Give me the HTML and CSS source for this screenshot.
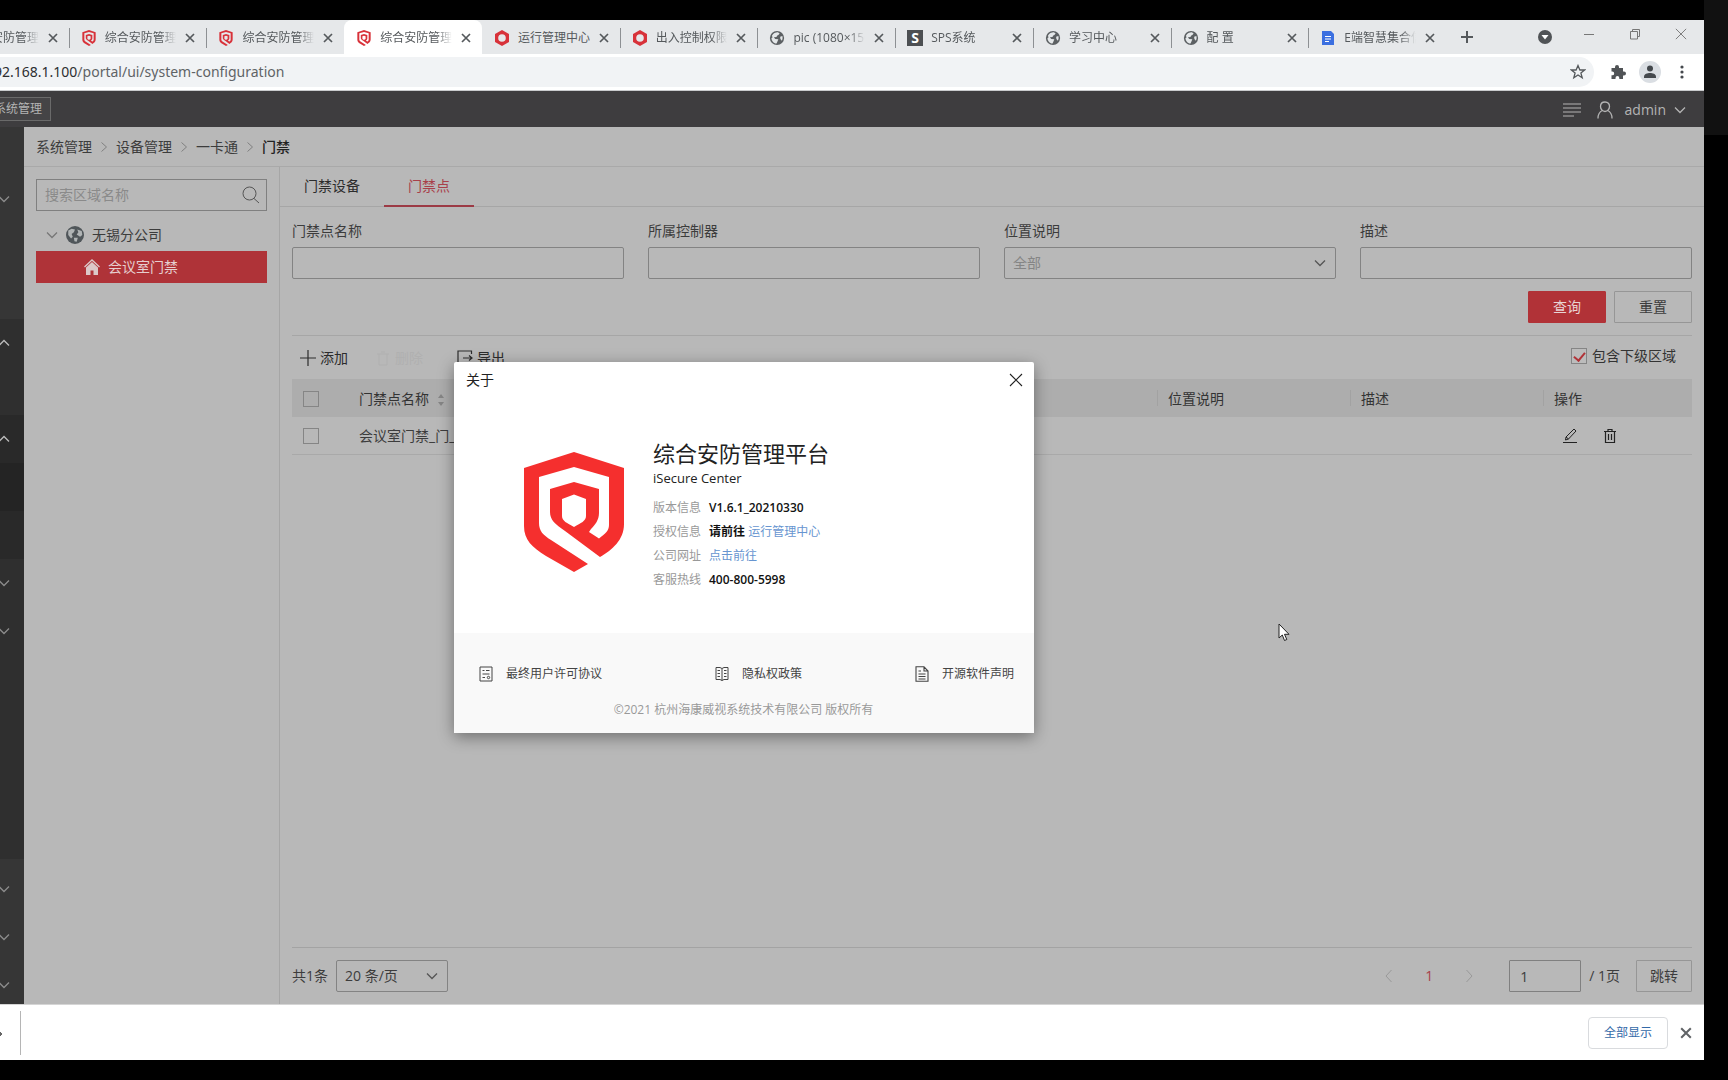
FILE: index.html
```html
<!DOCTYPE html>
<html lang="zh-CN">
<head>
<meta charset="utf-8">
<title>综合安防管理平台</title>
<link rel="stylesheet" href="styles.css">
</head>
<body>
<svg class="defs" aria-hidden="true">
  <symbol id="shield" viewBox="0 0 100 120">
    <path fill="currentColor" fill-rule="evenodd" d="M50 0 100 16V72C100 88 88 98 76 105L41 79C31 72 26 68 26 60V37L50 30 75 37V61C75 68 71 73 67 77L65 80 75 86.500C81 82 85 79 85 73V25L50 15 15 25V71C15 79 19 83 27 88L64 112 50 120 22 104C8 95 0 88 0 74V16ZM50 42.500 38 47V64C38 69 43 71 50 75 57 71 62 69 62 64V47Z"/>
  </symbol>
  <symbol id="hex" viewBox="0 0 16 16"><path fill="currentColor" fill-rule="evenodd" d="M8 0 15 4V12L8 16 1 12V4ZM8 4.200A3.800 3.800 0 1 0 8 11.800 3.800 3.800 0 0 0 8 4.200Z"/></symbol>
  <symbol id="globe" viewBox="-1 -1 18 18"><circle cx="8" cy="8" r="8" fill="#5c6063"/><path fill="#e4e7e9" d="M9 1.600 11 3 9.500 4.500 8 5.500 7.500 7 4.500 7.200 6 9 9.500 9.500 8.500 12 7.500 14.300C4 14 1.800 11 1.800 8L3 7.500 2.300 5.500C4 2.500 6.500 1.500 9 1.600ZM11.500 6.500 14 5.800C14.600 8 14.300 9.500 13.500 11L11.800 9.200Z"/></symbol>
  <symbol id="cross" viewBox="0 0 10 10"><path d="M1 1 9 9M9 1 1 9" fill="none" stroke="currentColor" stroke-width="1.700"/></symbol>
  <symbol id="thin-cross" viewBox="0 0 14 14"><path d="M1 1 13 13M13 1 1 13" fill="none" stroke="currentColor" stroke-width="1.100"/></symbol>
  <symbol id="down" viewBox="0 0 12 12"><path d="M1 3.500 6 8.500 11 3.500" fill="none" stroke="currentColor" stroke-width="1.300"/></symbol>
  <symbol id="up" viewBox="0 0 12 12"><path d="M1 8.500 6 3.500 11 8.500" fill="none" stroke="currentColor" stroke-width="1.300"/></symbol>
  <symbol id="right" viewBox="0 0 12 12"><path d="M3.500 1.500 8.500 6 3.500 10.500" fill="none" stroke="currentColor"/></symbol>
  <symbol id="left" viewBox="0 0 12 12"><path d="M8.500 0 3 6 8.500 12" fill="none" stroke="currentColor"/></symbol>
</svg>
<div class="screen">
<div class="window">
  <header class="tabstrip">
    <nav class="tabs" aria-label="标签页">
      <div class="tab"><svg class="fav red"><use href="#shield"/></svg><span class="tab-title">综合安防管理平台</span><button class="tab-close" aria-label="关闭"><svg><use href="#cross"/></svg></button></div>
      <div class="tab"><svg class="fav red"><use href="#shield"/></svg><span class="tab-title">综合安防管理平台</span><button class="tab-close" aria-label="关闭"><svg><use href="#cross"/></svg></button></div>
      <div class="tab"><svg class="fav red"><use href="#shield"/></svg><span class="tab-title">综合安防管理平台</span><button class="tab-close" aria-label="关闭"><svg><use href="#cross"/></svg></button></div>
      <div class="tab tab-active"><svg class="fav red"><use href="#shield"/></svg><span class="tab-title">综合安防管理平台</span><button class="tab-close" aria-label="关闭"><svg><use href="#cross"/></svg></button></div>
      <div class="tab"><svg class="fav red"><use href="#hex"/></svg><span class="tab-title tab-title-whole">运行管理中心</span><button class="tab-close" aria-label="关闭"><svg><use href="#cross"/></svg></button></div>
      <div class="tab"><svg class="fav red"><use href="#hex"/></svg><span class="tab-title">出入控制权限管理</span><button class="tab-close" aria-label="关闭"><svg><use href="#cross"/></svg></button></div>
      <div class="tab"><svg class="fav"><use href="#globe"/></svg><span class="tab-title">pic (1080×1500)</span><button class="tab-close" aria-label="关闭"><svg><use href="#cross"/></svg></button></div>
      <div class="tab"><span class="fav fav-s">S</span><span class="tab-title">SPS系统</span><button class="tab-close" aria-label="关闭"><svg><use href="#cross"/></svg></button></div>
      <div class="tab"><svg class="fav"><use href="#globe"/></svg><span class="tab-title">学习中心</span><button class="tab-close" aria-label="关闭"><svg><use href="#cross"/></svg></button></div>
      <div class="tab"><svg class="fav"><use href="#globe"/></svg><span class="tab-title">配 置</span><button class="tab-close" aria-label="关闭"><svg><use href="#cross"/></svg></button></div>
      <div class="tab"><svg class="fav" viewBox="0 0 16 16"><path fill="#3b6fe0" d="M2 1H11L14 4V15H2Z"/><path d="M5 6.500H11M5 9H11M5 11.500H9" stroke="#fff" stroke-width="1.200"/></svg><span class="tab-title">E端智慧集合信息</span><button class="tab-close" aria-label="关闭"><svg><use href="#cross"/></svg></button></div>
    </nav>
    <div class="window-controls">
      <button class="new-tab" aria-label="新标签页"><svg width="12" height="12" viewBox="0 0 12 12"><path d="M6 0V12M0 6H12" stroke="#55595c" stroke-width="2"/></svg></button>
      <button class="tab-search" aria-label="搜索标签页"><svg width="14" height="14" viewBox="0 0 14 14"><circle cx="7" cy="7" r="7" fill="#505356"/><path d="M3.500 5H10.500L7 9.500Z" fill="#fff"/></svg></button>
      <button class="raised" aria-label="最小化"><svg width="12" height="12" viewBox="0 0 12 12"><path d="M1 6.500H11" stroke="#777"/></svg></button>
      <button class="raised" aria-label="还原"><svg width="12" height="12" viewBox="0 0 12 12"><path d="M1.500 3.500H8.500V11H1.500ZM3.500 3.500V1.500H10.500V8.500H8.500" fill="none" stroke="#777"/></svg></button>
      <button class="raised" aria-label="关闭窗口"><svg width="12" height="12"><use href="#thin-cross"/></svg></button>
    </div>
  </header>
  <div class="toolbar">
    <div class="omnibox">
      <span class="url"><b>192.168.1.100</b>/portal/ui/system-configuration</span>
      <button class="tool" aria-label="收藏"><svg width="16" height="16" viewBox="0 0 16 16"><path d="M8 1.500 9.900 6H14.600L10.900 9 12.200 13.800 8 11 3.800 13.800 5.100 9 1.400 6H6.100Z" fill="none" stroke="#55595c" stroke-width="1.300"/></svg></button>
    </div>
    <button class="tool" aria-label="扩展程序"><svg width="16" height="16" viewBox="0 0 16 16"><path fill="#505356" d="M1.500 4H5V3A2 2 0 0 1 9 3V4H13V7.500H14A1.900 1.900 0 0 1 14 11.500H13V15H9.300V14A1.900 1.900 0 0 0 5.500 14V15H1.500V11.300H2.300A1.900 1.900 0 0 0 2.300 7.500H1.500Z"/></svg></button>
    <button class="tool" aria-label="用户"><svg width="22" height="22" viewBox="0 0 22 22"><circle cx="11" cy="11" r="11" fill="#dadee3"/><circle cx="11" cy="7.500" r="3" fill="#44484d"/><path d="M5 17V15.500C5 13 8.500 12 11 12S17 13 17 15.500V17Z" fill="#44484d"/></svg></button>
    <button class="tool" aria-label="更多"><svg width="4" height="14" viewBox="0 0 4 14"><g fill="#44484d"><circle cx="2" cy="2" r="1.600"/><circle cx="2" cy="7" r="1.600"/><circle cx="2" cy="12" r="1.600"/></g></svg></button>
  </div>

  <div class="app">
    <div class="app-header">
      <button class="module">系统管理</button>
      <div class="account">
        <svg width="18" height="14" viewBox="0 0 18 14"><path d="M0 1H18M0 5H18M0 9H18M0 13H11" stroke="currentColor"/></svg>
        <svg width="16" height="18" viewBox="0 0 16 18"><path d="M8 1C5 1 3.500 3 3.500 5.500S5.500 10.500 8 10.500 12.500 8 12.500 5.500 11 1 8 1ZM1 17.500C1 13 3 10.500 5.500 9.500M15 17.500C15 13 13 10.500 10.500 9.500" fill="none" stroke="currentColor" stroke-width="1.300"/></svg>
        <span>admin</span>
        <svg width="12" height="12"><use href="#down"/></svg>
      </div>
    </div>
    <div class="app-body">
      <nav class="rail" aria-label="菜单">
        <div class="rail-group g1"><button aria-label="展开"><svg><use href="#down"/></svg></button></div>
        <div class="rail-group g2 open"><button aria-label="收起"><svg><use href="#up"/></svg></button></div>
        <div class="rail-group g3 open"><button aria-label="收起"><svg><use href="#up"/></svg></button><span class="rail-current"></span></div>
        <div class="rail-group g4"><button aria-label="展开"><svg><use href="#down"/></svg></button><button aria-label="展开"><svg><use href="#down"/></svg></button></div>
        <div class="rail-group g5"><button aria-label="展开"><svg><use href="#down"/></svg></button><button aria-label="展开"><svg><use href="#down"/></svg></button><button aria-label="展开"><svg><use href="#down"/></svg></button></div>
      </nav>
      <div class="page">
        <nav class="crumbs" aria-label="路径">
          <a href="#">系统管理</a><svg><use href="#right"/></svg><a href="#">设备管理</a><svg><use href="#right"/></svg><a href="#">一卡通</a><svg><use href="#right"/></svg><strong>门禁</strong>
        </nav>
        <div class="split">
          <aside class="tree">
            <div class="search">
              <input type="text" placeholder="搜索区域名称" aria-label="搜索区域名称">
              <svg width="18" height="18" viewBox="0 0 18 18"><circle cx="7.500" cy="7.500" r="6.500" fill="none" stroke="#555"/><path d="M12 12.500 17 17" stroke="#555"/></svg>
            </div>
            <div class="node">
              <svg width="12" height="12"><use href="#down"/></svg>
              <svg width="18" height="18" viewBox="0 0 16 16"><circle cx="8" cy="8" r="8" fill="#50565a"/><path fill="#b0b4b5" d="M2 4 5 2.500 8 3 7 5.500 5 7 6 9.500 4.500 11 2 8ZM10 3 14 4.500 14.500 8 12.500 9.500 9.500 7.500 11 5.500ZM7 10.500 10.500 10.500 9.500 14 7.500 13.500Z"/></svg>
              <span>无锡分公司</span>
            </div>
            <div class="node node-selected">
              <svg width="16" height="16" viewBox="0 0 16 16"><path d="M.5 8 8 1 15.500 8" fill="none" stroke="#dcc9c9" stroke-width="1.300"/><path fill="#dcc9c9" d="M2 8.500 8 3 14 8.500V16H9.500V11.500H6.500V16H2Z"/></svg>
              <span>会议室门禁</span>
            </div>
          </aside>
          <main class="content">
            <div class="subtabs"><button>门禁设备</button><button class="current">门禁点</button></div>
            <form class="filters">
              <div class="field"><label for="f1">门禁点名称</label><input id="f1" type="text"></div>
              <div class="field"><label for="f2">所属控制器</label><input id="f2" type="text"></div>
              <div class="field"><label for="f3">位置说明</label><div class="select"><select id="f3" class="muted"><option>全部</option></select><svg><use href="#down"/></svg></div></div>
              <div class="field"><label for="f4">描述</label><input id="f4" type="text"></div>
              <div class="actions"><button type="button" class="btn btn-primary">查询</button><button type="button" class="btn">重置</button></div>
            </form>
            <div class="list">
              <div class="list-tools">
                <button class="action"><svg width="16" height="16" viewBox="0 0 16 16"><path d="M8 0V16M0 8H16" stroke="currentColor" stroke-width="1.200"/></svg>添加</button>
                <button class="action action-off" disabled><svg width="16" height="16" viewBox="0 0 16 16"><path d="M2 4H14M4 4V15H12V4M6 2H10" fill="none" stroke="currentColor"/></svg>删除</button>
                <button class="action"><svg width="16" height="16" viewBox="0 0 16 16"><path d="M14.500 4V1H1V15H14.500V12M6 8H15M12 5.500 15 8 12 10.500" fill="none" stroke="currentColor" stroke-width="1.200"/></svg>导出</button>
                <label class="include"><input type="checkbox" checked>包含下级区域</label>
              </div>
              <table class="grid">
                <colgroup><col class="c-check"><col class="c-name"><col><col class="c-mid"><col class="c-mid"><col class="c-ops"></colgroup>
                <thead><tr><th><input type="checkbox" aria-label="全选"></th><th>门禁点名称<svg class="sort" width="8" height="14" viewBox="0 0 8 14"><path fill="#858585" d="M4 1 7 5H1ZM4 13 7 9H1Z"/></svg></th><th></th><th class="sep">位置说明</th><th class="sep">描述</th><th class="sep">操作</th></tr></thead>
                <tbody><tr><td><input type="checkbox" aria-label="选择"></td><td>会议室门禁_门_</td><td></td><td></td><td></td><td>
                  <div class="ops">
                  <button aria-label="编辑"><svg width="16" height="16" viewBox="0 0 16 16"><path d="M1 14.500H15M3.500 12 4 9 12 1 14 3 6.500 11ZM4 9 6.500 11" fill="none" stroke="currentColor"/></svg></button>
                  <button aria-label="删除行"><svg width="14" height="16" viewBox="0 0 14 16"><path d="M1 3.500H13M5 3.500V1.500H9V3.500M2.500 3.500V14.500H11.500V3.500M5.500 6V12M8.500 6V12" fill="none" stroke="currentColor" stroke-width="1.200"/></svg></button>
                  </div>
                </td></tr></tbody>
              </table>
            </div>
            <div class="pager">
              <span>共1条</span>
              <div class="select page-size"><select aria-label="每页条数"><option>20 条/页</option></select><svg><use href="#down"/></svg></div>
              <div class="pages"><button aria-label="上一页" disabled><svg><use href="#left"/></svg></button><button class="page-now">1</button><button aria-label="下一页" disabled><svg class="flip"><use href="#left"/></svg></button></div>
              <input class="page-input" type="text" value="1" aria-label="页码">
              <span>/ 1页</span>
              <button class="btn btn-jump">跳转</button>
            </div>
          </main>
        </div>
      </div>
    </div>
  </div>
  <footer class="downloads">
    <span class="download-menu"></span>
    <button class="show-all">全部显示</button>
    <button class="downloads-close" aria-label="关闭下载栏"><svg width="12" height="12"><use href="#cross"/></svg></button>
  </footer>
</div>
<div class="edge"></div>

<section class="dialog" role="dialog" aria-labelledby="about">
  <header class="dialog-head"><h2 id="about">关于</h2><button aria-label="关闭对话框"><svg width="14" height="14"><use href="#thin-cross"/></svg></button></header>
  <div class="about">
    <svg class="logo"><use href="#shield"/></svg>
    <div>
      <h1>综合安防管理平台</h1>
      <p class="product">iSecure Center</p>
      <dl>
        <dt>版本信息</dt><dd>V1.6.1_20210330</dd>
        <dt>授权信息</dt><dd>请前往 <a href="#">运行管理中心</a></dd>
        <dt>公司网址</dt><dd><a href="#">点击前往</a></dd>
        <dt>客服热线</dt><dd>400-800-5998</dd>
      </dl>
    </div>
  </div>
  <footer class="legal">
    <div class="legal-links">
      <a href="#"><svg viewBox="0 0 14 16"><path d="M1 1H13V15H1ZM3.500 4.500H5.500M7 4.500H10.500M3.500 8H10.500M3.500 11.500H6" fill="none" stroke="currentColor"/><circle cx="9.500" cy="11.500" r="1.200" fill="none" stroke="currentColor"/></svg>最终用户许可协议</a>
      <a href="#"><svg viewBox="0 0 14 16"><path d="M7 2.500 5 1.500H1V13.500H5L7 14.500 9 13.500H13V1.500H9ZM7 2.500V14.500M2.500 4.500H5M2.500 7.500H5M2.500 10.500H5M9 4.500H11.500M9 7.500H11.500M9 10.500H11.500" fill="none" stroke="currentColor"/></svg>隐私权政策</a>
      <a href="#"><svg viewBox="0 0 14 16"><path d="M1 .8H9L13 5V15.200H1ZM9 1V5H13M3.500 8H10.500M3.500 10.500H10.500M3.500 13H10.500M3.500 5H6" fill="none" stroke="currentColor" stroke-width="1.100"/></svg>开源软件声明</a>
    </div>
    <p>©2021 杭州海康威视系统技术有限公司 版权所有</p>
  </footer>
</section>
<svg class="cursor" viewBox="0 0 12 19"><path d="M1 1V15L4.300 12 6.500 17.500 8.800 16.500 6.500 11.300H11Z" fill="#fff" stroke="#222"/></svg>
</div>
</body>
</html>
```
FILE: styles.css
```css
* { box-sizing: border-box; }
body { margin: 0; background: #000; color: #3c3c3c; font: 14px/20px "Open Sans", "Noto Sans CJK SC", sans-serif; }
button, input, select { font: inherit; color: inherit; margin: 0; padding: 0; border: 0; background: none; }
button { display: flex; align-items: center; justify-content: center; }
h1, h2, p, dl, dd { margin: 0; font-weight: 400; }
a { color: inherit; text-decoration: none; }
svg { flex: none; }
.defs { position: absolute; width: 0; height: 0; }

.screen { position: relative; display: grid; grid-template-columns: minmax(0, 1fr) 24px; min-height: 100vh; overflow: hidden; }
.window { display: flex; flex-direction: column; padding: 20px 0; overflow: hidden; }
.edge { height: 135px; background: #111; }

/* Browser chrome */
.tabstrip { display: flex; height: 34px; background: #e6e8ea; }
.tabs { display: flex; flex: 1; min-width: 0; margin-left: -69px; }
.tab { display: flex; flex: 1 1 0; min-width: 0; align-items: center; padding: 2px 8px 0 12px; color: #55595c; font-size: 12px; }
.tab::before { content: ""; width: 1px; height: 20px; margin-left: -12px; margin-right: 11px; background: #8d9093; }
.tab-active { background: #fff; border-radius: 8px 8px 0 0; }
.tab-active::before, .tab-active + .tab::before { background: transparent; }
.fav { width: 16px; height: 16px; margin-right: 8px; }
.red { color: #d8323a; }
.fav-s { flex: none; background: #4c4f52; color: #fff; font-weight: 700; font-size: 14px; line-height: 16px; text-align: center; }
.tab-title { flex: 1; min-width: 0; overflow: hidden; white-space: nowrap; mask-image: linear-gradient(to right, #000 78%, transparent); }
.tab-title-whole { mask-image: none; }
.tab-close { width: 16px; height: 16px; margin-left: 6px; }
.tab-close svg { width: 10px; height: 10px; }
.window-controls { display: flex; width: 258px; }
.window-controls button { width: 46px; }
.window-controls .new-tab { width: 42px; margin-right: auto; }
.window-controls .tab-search { width: 42px; }
.window-controls .raised { padding-bottom: 6px; color: #777; }
.toolbar { display: flex; align-items: center; height: 37px; padding-right: 6px; background: #fff; border-bottom: 1px solid #c9cbcd; }
.omnibox { display: flex; flex: 1; align-items: center; justify-content: space-between; height: 30px; margin-right: 8px; overflow: hidden; background: #f1f3f5; border-radius: 0 15px 15px 0; }
.url { margin-left: -14px; color: #5f6366; font-family: "Noto Sans", sans-serif; }
.url b { color: #2c2e30; font-weight: 400; }
.tool { width: 32px; height: 28px; }

/* Application */
.app { display: flex; flex: 1; flex-direction: column; }
.app-header { display: flex; align-items: center; justify-content: space-between; height: 36px; padding-right: 18px; background: #3e3d3f; color: #b4b4b4; }
.module { height: 24px; padding: 0 8px; margin-left: -15px; border: 1px solid #6a6a6a; background: #454446; font-size: 12px; }
.account { display: flex; align-items: center; gap: 12px; padding-top: 2px; }
.account svg:first-child { margin-right: 4px; }
.account svg:last-child { margin-left: -4px; }
.app-body { display: flex; flex: 1; }
.rail { display: flex; flex-direction: column; width: 24px; background: #363636; color: #8c8c8c; overflow: hidden; }
.rail button { width: 8px; height: 48px; }
.rail button svg { width: 12px; height: 12px; }
.rail-group.g1 { height: 192px; padding-top: 48px; }
.rail-group.g2 { height: 96px; background: #2f2f2f; }
.rail-group.g3 { height: 144px; background: #292929; }
.rail-group.g4 { height: 300px; background: #2f2f2f; }
.rail-group.g5 { flex: 1 1 0; height: 0; min-height: 0; padding-top: 6px; overflow: hidden; }
.open { color: #bcbcbc; }
.rail-current { display: block; height: 48px; background: #242424; }
.page { display: flex; flex: 1; flex-direction: column; min-width: 0; background: #b8b8b8; }
.crumbs { display: flex; align-items: center; gap: 6px; height: 40px; padding: 0 12px; border-bottom: 1px solid #a9a9a9; }
.crumbs svg { width: 12px; height: 12px; color: #808080; }
.crumbs strong { color: #222; font-weight: 500; }
.split { display: flex; flex: 1; }
.tree { width: 256px; padding: 12px; border-right: 1px solid #a6a6a6; }
.search { display: flex; align-items: center; height: 32px; margin-bottom: 8px; padding: 0 6px 0 8px; border: 1px solid #808080; }
.search input { flex: 1; min-width: 0; }
.search input::placeholder { color: #8a8a8a; opacity: 1; }
.node { display: flex; align-items: center; gap: 8px; height: 32px; padding-left: 10px; }
.node svg:first-child { color: #777; }
.node-selected { padding-left: 48px; background: #af3338; color: #e6cfd0; }
.content { display: flex; flex: 1; flex-direction: column; min-width: 0; }
.subtabs { display: flex; gap: 8px; height: 40px; border-bottom: 1px solid #a6a6a6; }
.subtabs button { height: 40px; width: 96px; padding: 0 0 2px 8px; color: #2c2c2c; }
.subtabs .current { width: 90px; padding: 0; border-bottom: 2px solid #9c3a45; color: #a8404a; }
.filters { display: grid; grid-template-columns: repeat(4, minmax(0, 1fr)); gap: 12px 24px; padding: 14px 12px 12px; }
.field { display: flex; flex-direction: column; gap: 6px; }
.field input, .select { width: 100%; height: 32px; border: 1px solid #838383; border-radius: 2px; padding: 0 8px; }
.select { position: relative; padding: 0; }
.select select { width: 100%; height: 100%; padding: 0 8px; appearance: none; }
.select svg { position: absolute; right: 9px; top: 9px; width: 12px; height: 12px; color: #555; pointer-events: none; }
.muted { color: #858585; }
.actions { display: flex; grid-column: 1 / -1; justify-content: flex-end; gap: 8px; }
.btn { width: 78px; height: 32px; border: 1px solid #969696; border-radius: 1px; }
.btn-primary { border-color: #b13237; background: #b13237; color: #e8d4d4; }
.list { flex: 1; margin: 0 12px; border-top: 1px solid #a6a6a6; }
.list-tools { display: flex; align-items: center; height: 43px; padding: 0 16px 0 8px; color: #2c2c2c; }
.action { gap: 4px; }
.action-off { margin: 0 34px 0 27px; color: #b0b0b0; }
.include { display: flex; align-items: center; gap: 5px; margin-left: auto; padding-bottom: 4px; color: #333; }
input[type="checkbox"] { display: block; appearance: none; width: 16px; height: 16px; border: 1px solid #858585; }
.include input { position: relative; background: #bcbcbc; }
.include input:checked::after { content: ""; position: absolute; left: 4px; top: 1px; width: 5px; height: 9px; border: solid #b13237; border-width: 0 2px 2px 0; transform: rotate(40deg); }
.grid { width: 100%; table-layout: fixed; border-collapse: collapse; text-align: left; }
.grid th, .grid td { height: 38px; padding: 1px 11px 0; font-weight: 400; white-space: nowrap; }
.grid th { background: #adadad; color: #333; }
.grid td { height: 37px; border-bottom: 1px solid #a9a9a9; }
.c-check { width: 56px; }
.c-name { width: 224px; }
.c-mid { width: 193px; }
.c-ops { width: 149px; }
.grid .sep { background: linear-gradient(#a2a2a2, #a2a2a2) left center / 1px 16px no-repeat #adadad; }
.sort { margin-left: 8px; vertical-align: middle; }
.ops { display: flex; gap: 25px; padding-left: 8px; color: #222; }
.pager { display: flex; align-items: center; height: 57px; margin: 0 12px; border-top: 1px solid #a3a3a3; }
.page-size { width: 112px; margin-left: 8px; margin-right: auto; }
.pages { display: flex; margin-right: 20px; color: #999; }
.pages button { width: 40px; height: 32px; }
.pages svg { width: 12px; height: 12px; }
.flip { transform: rotate(180deg); }
.pages .page-now { color: #a8404a; }
.page-input { width: 72px; height: 32px; margin-right: 8px; padding: 0 10px; border: 1px solid #808080; border-radius: 1px; }
.btn-jump { width: 56px; margin-left: 16px; }

/* Download shelf */
.downloads { display: flex; align-items: center; height: 56px; padding-right: 12px; background: #fff; border-top: 1px solid #d5d5d5; }
.download-menu { width: 21px; height: 44px; margin-right: auto; border-right: 1px solid #b5b5b5; background: radial-gradient(circle at 0 23px, #666 2px, transparent 2px); }
.show-all { width: 80px; height: 32px; margin-right: 12px; border: 1px solid #d9dbde; border-radius: 4px; color: #3369a8; font-size: 12px; }
.downloads-close { width: 12px; height: 32px; color: #606366; }

/* About dialog */
.dialog { position: absolute; left: 454px; top: 362px; width: 580px; background: #fff; border-radius: 2px; box-shadow: 0 4px 16px rgba(0, 0, 0, .4); color: #222; }
.dialog-head { display: flex; align-items: center; justify-content: space-between; height: 36px; padding: 0 11px 0 12px; }
.dialog-head h2 { font-size: 14px; }
.about { display: flex; gap: 29px; height: 235px; padding: 39px 70px 0; }
.logo { width: 100px; height: 120px; margin-top: 15px; color: #f52f2e; }
.about h1 { font-size: 22px; line-height: 32px; }
.product { font-size: 13px; line-height: 18px; }
.about dl { display: grid; grid-template-columns: 56px auto; padding-top: 9px; font-size: 12px; line-height: 24px; }
.about dt { color: #999; }
.about dd { color: #111; font-weight: 600; }
.about dd a { color: #6795d0; font-weight: 400; }
.legal { height: 100px; padding: 31px 20px 0 25px; background: #f9f9f9; font-size: 12px; text-align: center; color: #999; }
.legal-links { display: flex; justify-content: space-between; margin-bottom: 16px; color: #444; }
.legal-links a { display: flex; align-items: center; gap: 13px; }
.legal-links svg { width: 14px; height: 16px; }
.legal p { padding-right: 6px; }
.cursor { position: absolute; left: 1278px; top: 623px; width: 12px; height: 19px; }
```
